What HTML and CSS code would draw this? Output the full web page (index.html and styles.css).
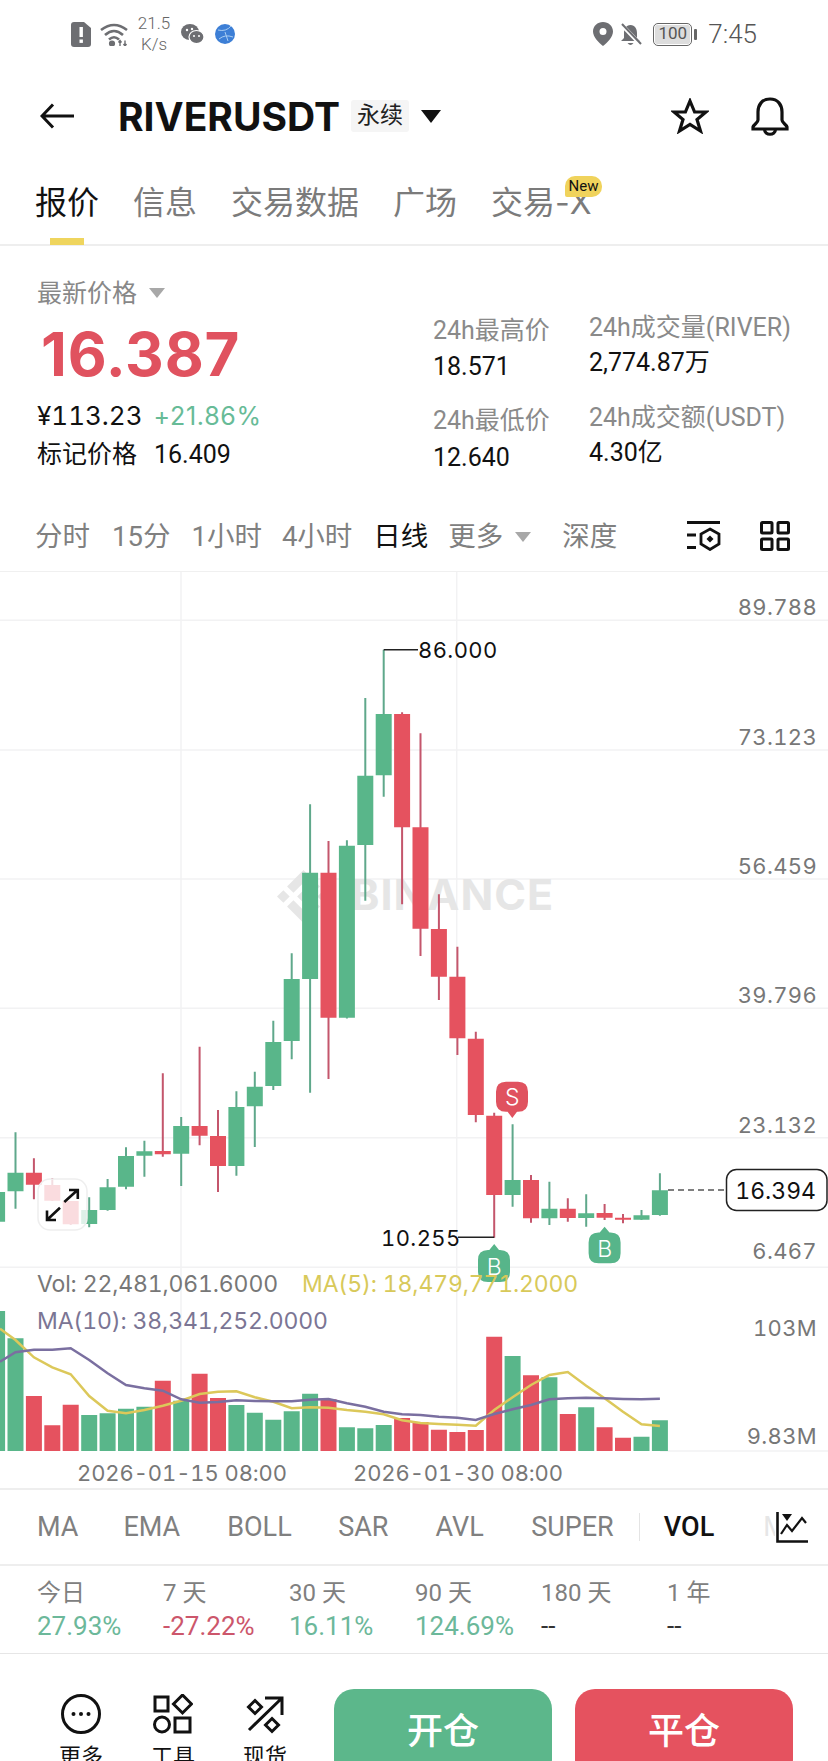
FILE: index.html
```html
<!DOCTYPE html>
<html lang="zh-CN">

<head>
  <meta charset="UTF-8">
  <meta name="viewport" content="width=device-width, initial-scale=1.0">
  <title>RIVERUSDT</title>
  <link rel="stylesheet" href="styles.css">
</head>

<body>
  <div class="page">

    <div class="status-bar">
      <svg class="sb-sim" viewBox="0 0 20 25"><path d="M3 0H13L20 6V22Q20 25 17 25H3Q0 25 0 22V3Q0 0 3 0Z" fill="#6d6e72"/><rect x="8.500" y="5" width="3.400" height="10" fill="#fff"/><rect x="8.500" y="17.500" width="3.400" height="3.400" fill="#fff"/></svg>
      <svg class="sb-wifi" viewBox="0 0 28 23" fill="none" stroke="#6d6e72" stroke-width="2.600"><path d="M1 7Q14 -3 27 7"/><path d="M5 12Q14 4 23 12"/><path d="M9 16.500Q14 12 19 16.500"/><circle cx="12" cy="20.500" r="1.800" fill="#6d6e72"/><path d="M20 23V17.500M25 23V17.500M18.500 19.500L20 17.500L21.500 19.500M23.500 21L25 23L26.500 21" stroke-width="1.400"/></svg>
      <div class="sb-speed"><span>21.5</span><span>K/s</span></div>
      <svg class="sb-wechat" viewBox="0 0 23 20"><ellipse cx="9" cy="8" rx="9" ry="8" fill="#6d6e72"/><ellipse cx="15.500" cy="13" rx="7.500" ry="6.500" fill="#6d6e72" stroke="#fff" stroke-width="1.200"/><circle cx="6" cy="6" r="1.200" fill="#fff"/><circle cx="11" cy="5" r="1.200" fill="#fff"/><circle cx="13" cy="12" r="1" fill="#fff"/><circle cx="18" cy="12" r="1" fill="#fff"/></svg>
      <svg class="sb-globe" viewBox="0 0 20 20"><circle cx="10" cy="10" r="10" fill="#3d7fd6"/><path d="M3 6Q11 8 16 2M4 15Q10 10 18 13M10 8L13 17" fill="none" stroke="#a9cdf2" stroke-width="1"/></svg>

      <div class="sb-right">
        <svg class="sb-pin" viewBox="0 0 20 24"><path fill-rule="evenodd" d="M10 0C4.500 0 0 4 0 9.500C0 15 6 21 10 24C14 21 20 15 20 9.500C20 4 15.500 0 10 0ZM10 6A3.500 3.500 0 1 1 10 13A3.500 3.500 0 0 1 10 6Z" fill="#6d6e72"/></svg>
        <svg class="sb-mute" viewBox="0 0 23 23"><path d="M11.500 2C7 2 5 6 5 10V15L2 18H21L18 15V10C18 6 16 2 11.500 2Z" fill="#6d6e72"/><path d="M8.500 20Q11.500 24 14.500 20Z" fill="#6d6e72"/><path d="M2 1L22 22" stroke="#fff" stroke-width="4"/><path d="M3 1L22 21" stroke="#6d6e72" stroke-width="2"/></svg>
        <div class="battery"><span class="battery-level">100</span></div>
        <span class="battery-nub"></span>
        <span class="sb-time">7:45</span>
      </div>
    </div>

    <div class="nav">
      <svg class="nav-back" viewBox="0 0 34 26" fill="none" stroke="#111" stroke-width="3"><path d="M34 13H2M13 1.500L2 13L13 24.500"/></svg>
      <span class="nav-title">RIVERUSDT</span>
      <span class="nav-tag">永续</span>
      <span class="tri tri-black"></span>
      <svg class="nav-star" viewBox="0 0 38 36" fill="none" stroke="#111" stroke-width="3.200" stroke-linejoin="miter"><path d="M19 3L23.600 14H35L26 21.500L29.500 33L19 26.500L8.500 33L12 21.500L3 14H14.400Z"/></svg>
      <svg class="nav-bell" viewBox="0 0 38 39" fill="none" stroke="#111" stroke-width="3.200"><path d="M19 2C11 2 7 8 7 15V23C7 26 3 27 2 30V32H36V30C35 27 31 26 31 23V15C31 8 27 2 19 2Z"/><path d="M13.500 32C13.500 39 24.500 39 24.500 32"/></svg>
    </div>

    <div class="tabs">
      <div class="tab tab-active">报价</div>
      <div class="tab">信息</div>
      <div class="tab">交易数据</div>
      <div class="tab">广场</div>
      <div class="tab tab-new">交易-X<span class="new-badge">New</span></div>
    </div>

    <div class="price-box">
      <div class="price-main">
        <div class="price-label">最新价格<span class="tri tri-gray"></span></div>
        <div class="price-now">16.387</div>
        <div class="price-sub">¥113.23<span class="price-change">+21.86%</span></div>
        <div class="price-mark">标记价格<span class="price-mark-value">16.409</span></div>
      </div>
      <div class="stat-col stat-col-a">
        <div class="stat-label">24h最高价</div>
        <div class="stat-value">18.571</div>
        <div class="stat-label stat-next">24h最低价</div>
        <div class="stat-value">12.640</div>
      </div>
      <div class="stat-col stat-col-b">
        <div class="stat-label">24h成交量(RIVER)</div>
        <div class="stat-value">2,774.87万</div>
        <div class="stat-label stat-next">24h成交额(USDT)</div>
        <div class="stat-value">4.30亿</div>
      </div>
    </div>

    <div class="intervals">
      <span class="iv iv-a">分时</span>
      <span class="iv iv-b">15分</span>
      <span class="iv iv-c">1小时</span>
      <span class="iv iv-d">4小时</span>
      <span class="iv iv-e iv-active">日线</span>
      <span class="iv iv-f">更多<span class="tri tri-gray"></span></span>
      <span class="iv iv-g">深度</span>
      <svg class="iv-icon iv-icon-a" viewBox="0 0 34 30" fill="none" stroke="#111" stroke-width="2.800"><path d="M0 1.500H33M0 14H9M0 26.500H9"/><path d="M23 8L32 13V23L23 28.500L14 23V13Z"/><path d="M23 14.500L26.500 18L23 21.500L19.500 18Z" fill="#111" stroke="none"/></svg>
      <svg class="iv-icon iv-icon-b" viewBox="0 0 30 30" fill="none" stroke="#111" stroke-width="3"><rect x="1.500" y="1.500" width="10.500" height="10.500" rx="1"/><rect x="18" y="1.500" width="10.500" height="10.500" rx="1"/><rect x="1.500" y="18" width="10.500" height="10.500" rx="1"/><rect x="18" y="18" width="10.500" height="10.500" rx="1"/></svg>
    </div>

    <div class="chart">
      <svg class="chart-svg" viewBox="0 572 828 916">
        <!-- grid -->
        <path class="grid" d="M0 620.300H828M0 750H828M0 879H828M0 1008.300H828M0 1137.700H828M0 1267.300H828M181 572V1451M456.700 572V1451M660 1451H828"/>

        <!-- watermark -->
        <g class="wm-logo" transform="translate(277 870) scale(.53)">
          <path d="M50 0L81 31L69 43L50 24L31 43L19 31Z"/>
          <path d="M50 100L19 69L31 57L50 76L69 57L81 69Z"/>
          <path d="M50 38L62 50L50 62L38 50Z"/>
          <path d="M12 38L24 50L12 62L0 50Z"/>
          <path d="M88 38L100 50L88 62L76 50Z"/>
        </g>
        <text class="wm-text" x="351" y="910">BINANCE</text>

        <!-- wicks -->
        <path class="wick-up" d="M-2.900 1180V1230M15.500 1132.300V1208.700M89.200 1197.300V1227.300M107.600 1179V1210.700M126 1147.300V1189.300M144.400 1140.700V1176.700M181.200 1117V1186M236.400 1091.300V1175.700M254.800 1071.700V1147M273.300 1020.700V1090M291.700 953.300V1059.300M310.100 804.300V1092.700M346.900 840.300V1018.500M365.300 698V900.700M383.700 649.700V796.700M512.600 1124.300V1206.700M549.400 1181.700V1225M586.200 1194.300V1226.700M641.500 1210V1220M659.900 1173.300V1215.700"/>
        <path class="wick-down" d="M33.900 1158.300V1199.300M52.300 1178V1201M70.700 1201V1225M162.800 1073.300V1156.700M199.600 1046.700V1145.300M218 1110V1192M328.500 841V1079M402.100 712.300V904.300M420.500 733.300V956M438.900 894.300V1000M457.400 946.700V1055M475.800 1031.700V1122.300M494.200 1112.700V1237.700M531 1175V1222.700M567.800 1198.300V1221.700M604.600 1204V1220M623 1214V1223.300"/>

        <!-- candle bodies -->
        <path class="body-up" d="M-2.900 1192V1221.700M15.500 1172.700V1191.300M89.200 1210V1224M107.600 1187.300V1210M126 1156V1186.700M144.400 1151.300V1155.700M181.200 1126V1153.700M236.400 1107V1166M254.800 1086.700V1106.300M273.300 1042V1086M291.700 979V1041M310.100 872.700V979M346.900 845.700V1017.700M365.300 775.700V845M383.700 714V775.300M512.600 1180V1195M549.400 1208.700V1218.300M586.200 1213.300V1218M641.500 1215.300V1219.700M659.900 1190.300V1215"/>
        <path class="body-down" d="M33.900 1172.700V1184.700M52.300 1185V1200.700M70.700 1201V1224.300M162.800 1151V1154.300M199.600 1126V1135.700M218 1136V1166M328.500 872.700V1017.700M402.100 714V827.300M420.500 827.300V928.700M438.900 929V976.700M457.400 976.700V1038.300M475.800 1038.700V1115M494.200 1115.700V1195M531 1180V1218.300M567.800 1208.700V1218M604.600 1213V1217.700M623 1217.700V1219.700"/>

        <!-- high / low markers -->
        <path class="marker-line" d="M383.700 649.700H418M458 1237.300H494.200"/>
        <text class="chart-mark" x="418" y="658">86.000</text>
        <text class="chart-mark" x="381" y="1246">10.255</text>

        <!-- trade badges -->
        <path class="badge-sell" d="M506 1081.700H518Q528 1081.700 528 1091.700V1101.700Q528 1111.700 518 1111.700H517L512.300 1118L507.600 1111.700H506Q496 1111.700 496 1101.700V1091.700Q496 1081.700 506 1081.700Z"/>
        <text class="badge-text" x="512.300" y="1104.500">S</text>
        <path class="badge-buy" d="M488 1250H489.300L494.200 1244L499 1250H500Q510 1250 510 1260V1272Q510 1282 500 1282H488Q478 1282 478 1272V1260Q478 1250 488 1250Z"/>
        <text class="badge-text" x="494.200" y="1275">B</text>
        <path class="badge-buy" d="M598.600 1232.500H599.700L604.600 1226.700L609.500 1232.500H610.600Q620.600 1232.500 620.600 1242.500V1253.300Q620.600 1263.300 610.600 1263.300H598.600Q588.600 1263.300 588.600 1253.300V1242.500Q588.600 1232.500 598.600 1232.500Z"/>
        <text class="badge-text" x="604.600" y="1256.500">B</text>

        <!-- last price -->
        <path class="last-dash" d="M668 1190H726"/>
        <rect class="last-box" x="726.500" y="1169.500" width="100.500" height="41" rx="10"/>
        <text class="last-text" x="816" y="1198.500">16.394</text>

        <!-- axis -->
        <text class="axis" x="817" y="615">89.788</text>
        <text class="axis" x="817" y="745">73.123</text>
        <text class="axis" x="817" y="874">56.459</text>
        <text class="axis" x="817" y="1003">39.796</text>
        <text class="axis" x="817" y="1132.700">23.132</text>
        <text class="axis" x="817" y="1259.300">6.467</text>

        <!-- expand button -->
        <rect class="expand-box" x="38" y="1179" width="49" height="51" rx="12"/>
        <path class="expand-arrow" d="M64.300 1202L77 1190.500M69 1190H77.800V1199M60 1207.700L47.500 1219.500M47 1210.500V1220H56"/>

        <!-- volume bars -->
        <path class="body-up" d="M-2.900 1311V1451M15.500 1338.300V1451M89.200 1415V1451M107.600 1413.300V1451M126 1408.700V1451M144.400 1406.700V1451M181.200 1400.700V1451M236.400 1405V1451M254.800 1412.700V1451M273.300 1419.700V1451M291.700 1411.300V1451M310.100 1393.700V1451M346.900 1427.300V1451M365.300 1428.300V1451M383.700 1425V1451M512.600 1356V1451M549.400 1377.300V1451M586.200 1407.300V1451M641.500 1436.700V1451M659.900 1420.300V1451"/>
        <path class="body-down" d="M33.900 1396V1451M52.300 1425.300V1451M70.700 1404.700V1451M162.800 1380.700V1451M199.600 1373.700V1451M218 1398V1451M328.500 1399.300V1451M402.100 1418V1451M420.500 1422V1451M438.900 1429.700V1451M457.400 1432V1451M475.800 1430V1451M494.200 1336.700V1451M531 1375.300V1451M567.800 1414V1451M604.600 1427.300V1451M623 1437.700V1451"/>

        <!-- MA lines -->
        <polyline class="ma-five" points="0,1328.700 15.500,1340 33.900,1357.300 52.300,1367.300 70.700,1374.300 89.200,1396 107.600,1410.700 126,1413.300 144.400,1410 162.800,1405.700 181.200,1400.700 199.600,1394 218,1391.700 236.400,1391.300 254.800,1397.300 273.300,1401.700 291.700,1408.300 310.100,1407.300 328.500,1407.700 346.900,1410 365.300,1411.700 383.700,1414.300 402.100,1420.300 420.500,1423 438.900,1424 457.400,1424.700 475.800,1425.700 494.200,1410 512.600,1397.300 531,1385 549.400,1375 567.800,1372 586.200,1385.700 604.600,1398.300 623,1411.700 641.500,1424.300 659.900,1426"/>
        <polyline class="ma-ten" points="0,1361.700 15.500,1352.300 33.900,1349.700 52.300,1349.700 70.700,1348.300 89.200,1360 107.600,1373.300 126,1385 144.400,1388.300 162.800,1390.700 181.200,1399.300 199.600,1402.700 218,1402 236.400,1400.300 254.800,1401 273.300,1401.300 291.700,1401.300 310.100,1399.700 328.500,1399 346.900,1403.300 365.300,1406.700 383.700,1411.700 402.100,1414.300 420.500,1415 438.900,1416.700 457.400,1417.700 475.800,1420 494.200,1414 512.600,1409.300 531,1405 549.400,1399.300 567.800,1398.300 586.200,1397.700 604.600,1398.300 623,1399 641.500,1399.300 659.900,1398.700"/>

        <!-- volume legend -->
        <text class="legend legend-vol" x="37" y="1292">Vol: 22,481,061.6000</text>
        <text class="legend legend-five" x="302" y="1292">MA(5): 18,479,771.2000</text>
        <text class="legend legend-ten" x="37" y="1329">MA(10): 38,341,252.0000</text>
        <text class="axis" x="817" y="1336">103M</text>
        <text class="axis" x="817" y="1444">9.83M</text>
        <text class="date" x="77" y="1480.700">2026-01-15 08:00</text>
        <text class="date" x="353" y="1480.700">2026-01-30 08:00</text>
      </svg>
    </div>

    <div class="indicators">
      <span class="ind ind-ma">MA</span>
      <span class="ind ind-ema">EMA</span>
      <span class="ind ind-boll">BOLL</span>
      <span class="ind ind-sar">SAR</span>
      <span class="ind ind-avl">AVL</span>
      <span class="ind ind-super">SUPER</span>
      <span class="ind-sep"></span>
      <span class="ind ind-vol">VOL</span>
      <span class="ind ind-more">M</span>
      <svg class="ind-icon" viewBox="0 0 32 31" fill="none" stroke="#111" stroke-width="2.600"><path d="M1.500 0V29.500H32"/><path d="M5 22L11 13L16 19L26 6L30 11" stroke-width="2.200"/><path d="M6 2H16L11 9Z" fill="#111" stroke="none"/></svg>
    </div>

    <div class="returns">
      <div class="ret"><div class="ret-label">今日</div><div class="ret-value up">27.93%</div></div>
      <div class="ret"><div class="ret-label">7 天</div><div class="ret-value down">-27.22%</div></div>
      <div class="ret"><div class="ret-label">30 天</div><div class="ret-value up">16.11%</div></div>
      <div class="ret"><div class="ret-label">90 天</div><div class="ret-value up">124.69%</div></div>
      <div class="ret"><div class="ret-label">180 天</div><div class="ret-value">--</div></div>
      <div class="ret"><div class="ret-label">1 年</div><div class="ret-value">--</div></div>
    </div>

    <div class="bottom-bar">
      <div class="tool">
        <svg class="tool-icon" viewBox="0 0 40 40" fill="none" stroke="#111" stroke-width="3"><circle cx="20" cy="20" r="18.500"/><circle cx="12.500" cy="20" r="2" fill="#111" stroke="none"/><circle cx="20" cy="20" r="2" fill="#111" stroke="none"/><circle cx="27.500" cy="20" r="2" fill="#111" stroke="none"/></svg>
        <span>更多</span>
      </div>
      <div class="tool">
        <svg class="tool-icon" viewBox="0 0 40 40" fill="none" stroke="#111" stroke-width="3"><rect x="2" y="3" width="13" height="14"/><path d="M29.500 1L38.500 10L29.500 19L20.500 10Z"/><circle cx="9" cy="30.500" r="7.500"/><rect x="22" y="24" width="15" height="14"/></svg>
        <span>工具</span>
      </div>
      <div class="tool">
        <svg class="tool-icon" viewBox="0 0 40 40" fill="none" stroke="#111" stroke-width="3"><path d="M4 36L37 4M20 4H37V21"/><path d="M10 6.500L16.500 13L10 19.500L3.500 13Z"/><path d="M27 24.500L33.500 31L27 37.500L20.500 31Z"/></svg>
        <span>现货</span>
      </div>
      <div class="trade-btn trade-open">开仓</div>
      <div class="trade-btn trade-close">平仓</div>
    </div>

  </div>
</body>

</html>
```
FILE: styles.css
```css
* {
  box-sizing: border-box;
}

body {
  margin: 0;
  background: #fff;
}

.page {
  width: 828px;
  height: 1761px;
  overflow: hidden;
  background: #fff;
  color: #111;
  font-family: Roboto, "Noto Sans CJK SC", sans-serif;
}

.tri {
  display: inline-block;
  width: 0;
  height: 0;
  border-style: solid;
  border-color: transparent;
  border-bottom-width: 0;
}

.tri-black {
  border-width: 13px 10px 0;
  border-top-color: #111;
  margin-left: 12px;
}

.tri-gray {
  border-width: 10px 8px 0;
  border-top-color: #a8a8a8;
  margin-left: 12px;
  vertical-align: 4px;
}

/* status bar */
.status-bar {
  height: 68px;
  display: flex;
  align-items: center;
  padding: 0 71px;
}

.sb-sim {
  width: 20px;
  height: 25px;
}

.sb-wifi {
  width: 28px;
  height: 23px;
  margin-left: 9px;
}

.sb-speed {
  display: flex;
  flex-direction: column;
  align-items: center;
  width: 36px;
  margin-left: 8px;
  font-size: 17px;
  font-weight: 300;
  line-height: 21px;
  color: #666;
}

.sb-wechat {
  width: 23px;
  height: 20px;
  margin-left: 9px;
}

.sb-globe {
  width: 20px;
  height: 20px;
  margin-left: 11px;
}

.sb-right {
  margin-left: auto;
  display: flex;
  align-items: center;
}

.sb-pin {
  width: 20px;
  height: 24px;
}

.sb-mute {
  width: 23px;
  height: 23px;
  margin-left: 6px;
}

.battery {
  width: 39px;
  height: 23px;
  margin-left: 11px;
  padding: 1px;
  border: 1.5px solid #666;
  border-radius: 5px;
}

.battery-level {
  display: block;
  height: 100%;
  background: #ddd;
  border-radius: 2px;
  font-size: 17px;
  line-height: 17px;
  text-align: center;
  color: #555;
}

.battery-nub {
  width: 3px;
  height: 11px;
  margin-left: 2px;
  background: #666;
  border-radius: 1px;
}

.sb-time {
  margin-left: 11px;
  font-size: 26px;
  font-weight: 300;
  color: #555;
}

/* title row */
.nav {
  height: 96px;
  display: flex;
  align-items: center;
  padding-left: 40px;
}

.nav-back {
  width: 34px;
  height: 26px;
}

.nav-title {
  margin-left: 44px;
  font-family: Inter, sans-serif;
  font-size: 39px;
  font-weight: 700;
}

.nav-tag {
  margin-left: 11px;
  padding: 0 6px;
  background: #f5f5f5;
  border-radius: 3px;
  font-size: 23px;
  line-height: 32px;
  color: #222;
}

.nav-star {
  width: 38px;
  height: 36px;
  margin-left: auto;
}

.nav-bell {
  width: 38px;
  height: 39px;
  margin-left: 42px;
  margin-right: 39px;
}

/* tabs */
.tabs {
  height: 82px;
  display: flex;
  align-items: flex-start;
  gap: 34px;
  padding: 22px 0 0 35px;
  border-bottom: 2px solid #eeeeee;
  font-size: 32px;
  line-height: 34px;
  color: #7b7b7b;
}

.tab-active {
  color: #111;
}

.tab-active::after {
  content: "";
  display: block;
  width: 34px;
  height: 7px;
  margin: 18px auto 0;
  background: #efd55e;
}

.tab-new {
  position: relative;
  font-family: Inter, "Noto Sans CJK SC", sans-serif;
}

.new-badge {
  position: absolute;
  left: 74px;
  top: -10px;
  width: 37px;
  height: 21px;
  background: #f0d35c;
  border-radius: 10px 10px 10px 2px;
  font-family: Roboto, sans-serif;
  font-size: 15px;
  line-height: 21px;
  text-align: center;
  color: #111;
}

/* price block */
.price-box {
  height: 264px;
  display: flex;
  align-items: flex-start;
}

.price-main {
  width: 433px;
  padding: 31px 0 0 37px;
}

.price-label {
  font-size: 25px;
  line-height: 34px;
  color: #888;
}

.price-now {
  margin-top: 11px;
  padding-left: 4px;
  font-family: Inter, sans-serif;
  font-size: 60px;
  font-weight: 700;
  line-height: 64px;
  letter-spacing: 0.8px;
  color: #e0525f;
}

.price-sub {
  margin-top: 13px;
  font-family: Inter, sans-serif;
  font-size: 26px;
  font-variant-numeric: tabular-nums;
  line-height: 34px;
}

.price-change {
  margin-left: 11px;
  font-size: 25px;
  font-variant-numeric: normal;
  letter-spacing: 0.7px;
  color: #67bb97;
}

.price-mark {
  margin-top: 5px;
  font-size: 25px;
  line-height: 34px;
}

.price-mark-value {
  margin-left: 17px;
}

.stat-col-a {
  width: 156px;
  padding-top: 68px;
}

.stat-col-b {
  padding-top: 65px;
}

.stat-label {
  font-size: 25px;
  line-height: 34px;
  color: #8a8a8a;
  white-space: nowrap;
}

.stat-value {
  margin-top: 3px;
  font-size: 25px;
  line-height: 30px;
}

.stat-next {
  margin-top: 23px;
}

.stat-col-a .stat-value {
  margin-top: 4px;
}

.stat-col-a .stat-next {
  margin-top: 22px;
}

.stat-col-a .stat-next + .stat-value {
  margin-top: 5px;
}

/* interval row */
.intervals {
  height: 62px;
  display: flex;
  align-items: center;
  padding: 0 0 14px 35px;
  border-bottom: 1px solid #f0f0f0;
  font-size: 27.5px;
  color: #808080;
}

.iv-active {
  color: #111;
}

.iv-b {
  margin-left: 22px;
}

.iv-c {
  margin-left: 21px;
}

.iv-d {
  margin-left: 20px;
}

.iv-e {
  margin-left: 21px;
}

.iv-f {
  margin-left: 20px;
}

.iv-g {
  margin-left: 31px;
}

.iv-icon-a {
  width: 34px;
  height: 30px;
  margin-left: auto;
  margin-top: 5px;
}

.iv-icon-b {
  width: 30px;
  height: 30px;
  margin-left: 39px;
  margin-right: 38px;
  margin-top: 5px;
}

/* chart */
.chart {
  height: 918px;
  border-bottom: 2px solid #eeeeee;
}

.chart-svg {
  display: block;
  width: 828px;
  height: 916px;
}

.grid {
  fill: none;
  stroke: #f2f2f3;
  stroke-width: 1.5;
}

.wm-logo {
  fill: #e6e6e6;
}

.wm-text {
  font-family: Inter, sans-serif;
  font-size: 43px;
  font-weight: 700;
  letter-spacing: 1px;
  fill: #e6e6e6;
}

.wick-up,
.wick-down {
  fill: none;
  stroke-width: 2;
}

.wick-up {
  stroke: #5fa88b;
}

.wick-down {
  stroke: #c4566c;
}

.body-up,
.body-down {
  fill: none;
  stroke-width: 16;
}

.body-up {
  stroke: #59b68a;
}

.body-down {
  stroke: #e5525f;
}

.marker-line {
  fill: none;
  stroke: #222;
  stroke-width: 1.5;
}

.chart-mark {
  font-family: Inter, sans-serif;
  font-size: 22px;
  font-variant-numeric: tabular-nums;
  letter-spacing: 0.4px;
  fill: #111;
}

.badge-sell {
  fill: #e0525f;
}

.badge-buy {
  fill: #57b58a;
}

.badge-text {
  font-family: Inter, sans-serif;
  font-size: 23px;
  font-weight: 300;
  text-anchor: middle;
  fill: #fff;
}

.last-dash {
  stroke: #555;
  stroke-width: 1.5;
  stroke-dasharray: 6 4;
}

.last-box {
  fill: #fff;
  stroke: #222;
  stroke-width: 1.5;
}

.last-text {
  font-family: Inter, sans-serif;
  font-size: 23px;
  font-variant-numeric: tabular-nums;
  text-anchor: end;
  fill: #111;
}

.axis {
  font-family: Inter, sans-serif;
  font-size: 22px;
  font-variant-numeric: tabular-nums;
  letter-spacing: 0.35px;
  text-anchor: end;
  fill: #777;
}

.expand-box {
  fill: rgba(255, 255, 255, 0.8);
  stroke: #eeeeee;
  stroke-width: 1.5;
}

.expand-arrow {
  fill: none;
  stroke: #111;
  stroke-width: 2.6;
}

.ma-five,
.ma-ten {
  fill: none;
  stroke-width: 2.5;
}

.ma-five {
  stroke: #dcc85a;
}

.ma-ten {
  stroke: #7a6fa0;
}

.legend {
  font-family: Inter, sans-serif;
  font-size: 23px;
  font-variant-numeric: tabular-nums;
  letter-spacing: -0.15px;
}

.legend-vol {
  fill: #777;
}

.legend-five {
  fill: #d8c95a;
}

.legend-ten {
  fill: #7b7594;
}

.date {
  font-family: Inter, sans-serif;
  font-size: 22px;
  font-variant-numeric: tabular-nums;
  letter-spacing: -0.1px;
  fill: #777;
}

/* indicator row */
.indicators {
  height: 76px;
  display: flex;
  align-items: center;
  padding-left: 37px;
  border-bottom: 2px solid #eeeeee;
  font-size: 27px;
  color: #808080;
}

.ind-ema {
  margin-left: 45px;
}

.ind-boll {
  margin-left: 47px;
}

.ind-sar {
  margin-left: 46.5px;
}

.ind-avl {
  margin-left: 47px;
}

.ind-super {
  margin-left: 47.5px;
}

.ind-sep {
  width: 1px;
  height: 28px;
  margin-left: 25px;
  background: #e4e4e4;
}

.ind-vol {
  margin-left: 24px;
  font-weight: 500;
  color: #111;
}

.ind-more {
  margin-left: 49px;
  width: 12px;
  overflow: hidden;
  color: #e6e6e6;
}

.ind-icon {
  width: 32px;
  height: 31px;
  margin-left: 1px;
}

/* returns row */
.returns {
  height: 88px;
  display: grid;
  grid-template-columns: repeat(6, 126px);
  padding: 12px 0 0 37px;
  border-bottom: 1px solid #e6e6e6;
}

.ret-label {
  font-size: 24px;
  line-height: 30px;
  color: #808080;
}

.ret-value {
  margin-top: 5px;
  font-size: 26px;
  line-height: 26px;
  color: #333;
}

.ret-value.up {
  color: #6cb89a;
}

.ret-value.down {
  color: #cc566b;
}

/* bottom actions */
.bottom-bar {
  display: flex;
  align-items: flex-start;
  padding: 35px 0 0 35px;
}

.tool {
  width: 92px;
  padding-top: 5px;
  display: flex;
  flex-direction: column;
  align-items: center;
  font-size: 22px;
  line-height: 30px;
}

.tool-icon {
  width: 40px;
  height: 40px;
  margin-bottom: 8px;
}

.trade-btn {
  width: 218px;
  height: 90px;
  padding-top: 20px;
  border-radius: 20px;
  font-size: 36px;
  font-weight: 500;
  line-height: 46px;
  text-align: center;
  color: #fff;
}

.trade-open {
  margin-left: 23px;
  background: #5cb78b;
}

.trade-close {
  margin-left: 23px;
  background: #e5525f;
}
```
